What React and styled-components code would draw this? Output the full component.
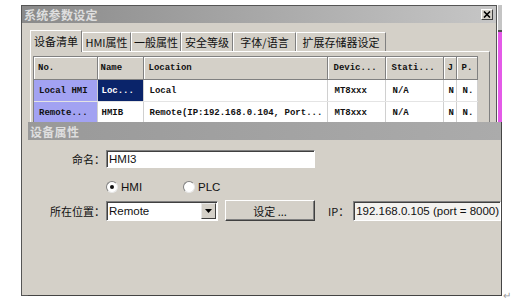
import React from 'react';
import styled, { createGlobalStyle } from 'styled-components';

const cjk = `"Noto Sans CJK SC", "Liberation Sans", sans-serif`;
const sans = `"Liberation Sans", "Noto Sans CJK SC", sans-serif`;
const mono = `"Liberation Mono", "Noto Sans CJK SC", monospace`;

const GlobalStyle = createGlobalStyle`
    html, body {
        margin: 0;
        padding: 0;
        background: #fff;
    }
    body {
        width: 524px;
        height: 306px;
        overflow: hidden;
    }
`

const Desktop = styled.div`
    position: relative;
    width: 524px;
    height: 306px;
    box-sizing: border-box;
    padding: 5px 0 0 21px;
    display: flex;
    align-items: flex-start;
    overflow: hidden;
`

const BackWindow = styled.div`
    width: 476px;
    height: 291px;
    box-sizing: border-box;
    border: 1px solid #555;
    background: #d4d0c8;
    display: flex;
    flex-direction: column;
    overflow: hidden;
`

const TitleBar = styled.div`
    height: ${p => p.$h}px;
    flex-shrink: 0;
    display: flex;
    align-items: center;
    justify-content: space-between;
    padding: 0 3px 0 2px;
    background: linear-gradient(90deg, ${p => p.$from}, ${p => p.$to});
    color: #dedede;
    font-family: ${cjk};
    font-size: 12px;
    font-weight: 700;
    letter-spacing: 0.3px;
`

const CloseButton = styled.div`
    width: 12px;
    height: 11px;
    box-sizing: border-box;
    background: #d4d0c8;
    border: 1px solid;
    border-color: #fff #404040 #404040 #fff;
    display: flex;
    align-items: center;
    justify-content: center;
`

const WindowBody = styled.div`
    padding: 6px 6px 0 8px;
    display: flex;
    flex-direction: column;
`

const TabStrip = styled.div`
    display: flex;
    align-items: flex-end;
    height: 22px;
    position: relative;
    z-index: 1;
`

const Tab = styled.div`
    width: ${p => p.$w}px;
    height: ${p => (p.$active ? 22 : 19)}px;
    box-sizing: border-box;
    display: flex;
    align-items: center;
    justify-content: center;
    border-left: 1px solid #fff;
    border-top: 1px solid #fff;
    border-right: 1px solid #808080;
    background: #d4d0c8;
    font-family: ${cjk};
    font-size: 11px;
    color: #111;
    white-space: nowrap;
    margin-bottom: ${p => (p.$active ? -1 : 0)}px;
    padding-bottom: ${p => (p.$active ? 1 : 0)}px;
`

const TabPanel = styled.div`
    height: 120px;
    box-sizing: border-box;
    border-top: 1px solid #fff;
    border-left: 1px solid #fff;
    border-right: 1px solid #808080;
    padding: 4px 9px 0 2px;
`

const ListView = styled.div`
    border-top: 1px solid #808080;
    border-left: 1px solid #808080;
    background: #fff;
    width: 444px;
`

const Table = styled.table`
    border-collapse: collapse;
    table-layout: fixed;
    width: 443px;
    font-family: ${mono};
    font-size: 9px;
    font-weight: 700;
    color: #111;
`

const HeadCell = styled.th`
    height: 22px;
    padding: 0 0 0 ${p => p.$pad ?? 4}px;
    text-align: left;
    font-weight: 700;
    background: #d4d0c8;
    border-right: 1px solid #808080;
    border-bottom: 1px solid #808080;
    box-shadow: inset 1px 1px #fff;
    white-space: nowrap;
    overflow: hidden;
`

const Cell = styled.td`
    height: 21px;
    padding: 0 0 0 ${p => p.$pad ?? 5}px;
    background: ${p => p.$bg || '#fff'};
    color: ${p => p.$fg || '#111'};
    border-right: 1px solid #d0d0d0;
    border-bottom: 1px solid #e4e4e4;
    white-space: nowrap;
    overflow: hidden;
`

const SideStrip = styled.div`
    width: 4px;
    margin-left: 1px;
    display: flex;
    flex-direction: column;
`

const StripGrip = styled.div`
    height: 25px;
    background: #c4c4c4;
    border-bottom: 2px solid #505050;
`

const StripPink = styled.div`
    height: 92px;
    background: #e45ae8;
`

const ReturnMark = styled.div`
    align-self: flex-end;
    margin: 0 0 5px 1px;
    font-family: ${sans};
    font-size: 10px;
    color: #9a9a9a;
`

const FrontDialog = styled.div`
    position: absolute;
    left: 28px;
    top: 122px;
    width: 474px;
    height: 174px;
    box-sizing: border-box;
    background: #d4d0c8;
    border-right: 1px solid #444;
    border-bottom: 1px solid #444;
    display: flex;
    flex-direction: column;
    overflow: hidden;
`

const DialogBody = styled.div`
    display: flex;
    flex-direction: column;
    padding-top: 10px;
`

const FieldRow = styled.div`
    display: flex;
    align-items: center;
    margin-top: ${p => p.$top || 0}px;
    height: ${p => p.$h}px;
    padding-left: ${p => p.$indent || 0}px;
`

const Label = styled.div`
    width: 77px;
    margin-right: 1px;
    text-align: right;
    font-family: ${cjk};
    font-size: 11px;
    color: #111;
    white-space: nowrap;
`

const Sunken = styled.div`
    height: ${p => p.$h}px;
    width: ${p => (p.$w ? `${p.$w}px` : 'auto')};
    flex: ${p => (p.$w ? 'none' : '1 0 auto')};
    box-sizing: border-box;
    background: ${p => p.$bg || '#fff'};
    border: 1px solid;
    border-color: #808080 #fff #fff #808080;
    box-shadow: inset 1px 1px #404040;
    display: flex;
    align-items: center;
    padding-left: 2px;
    font-family: ${sans};
    font-size: 11.5px;
    color: #111;
    white-space: nowrap;
`

const SelectText = styled.div`
    flex: 1;
`

const DropButton = styled.div`
    width: 15px;
    height: 16px;
    margin-right: 1px;
    box-sizing: border-box;
    background: #d4d0c8;
    border: 1px solid;
    border-color: #e8e8e8 #404040 #404040 #e8e8e8;
    display: flex;
    align-items: center;
    justify-content: center;
`

const PushButton = styled.div`
    width: 90px;
    height: 21px;
    margin-left: 7px;
    box-sizing: border-box;
    background: #d4d0c8;
    border: 1px solid;
    border-color: #fff #404040 #404040 #fff;
    box-shadow: inset -1px -1px #808080;
    display: flex;
    align-items: center;
    justify-content: center;
    font-family: ${cjk};
    font-size: 11px;
    color: #111;
`

const IpLabel = styled.div`
    margin: 0 4px 0 13px;
    font-family: ${cjk};
    font-size: 11px;
    color: #111;
`

const RadioOption = styled.div`
    display: flex;
    align-items: center;
    gap: 3px;
    width: ${p => p.$w}px;
    font-family: ${sans};
    font-size: 11.5px;
    color: #111;
`

const RadioDot = styled.span`
    width: 12px;
    height: 12px;
    box-sizing: border-box;
    border-radius: 50%;
    background: #fff;
    border: 1px solid;
    border-color: #808080 #e8e8e8 #e8e8e8 #808080;
    display: flex;
    align-items: center;
    justify-content: center;
    &::after {
        content: '';
        width: 4px;
        height: 4px;
        border-radius: 50%;
        background: ${p => (p.$on ? '#111' : 'transparent')};
    }
`

const tabs = [
    { label: '设备清单', w: 52, active: true },
    { label: 'HMI属性', w: 49 },
    { label: '一般属性', w: 50 },
    { label: '安全等级', w: 52 },
    { label: '字体/语言', w: 63 },
    { label: '扩展存储器设定', w: 90 },
]

const columns = [
    { title: 'No.', w: 63, pad: 4 },
    { title: 'Name', w: 46, pad: 3 },
    { title: 'Location', w: 184, pad: 5 },
    { title: 'Devic...', w: 58, pad: 6 },
    { title: 'Stati...', w: 58, pad: 6 },
    { title: 'J', w: 13, pad: 4 },
    { title: 'P.', w: 21, pad: 5 },
]

const rows = [
    ['Local HMI', 'Loc...', 'Local', 'MT8xxx', 'N/A', 'N', 'N.'],
    ['Remote...', 'HMIB', 'Remote(IP:192.168.0.104, Port...', 'MT8xxx', 'N/A', 'N', 'N.'],
]

const cellColors = (r, c) => {
    if (c === 0) return { bg: '#a2a2f2' };
    if (r === 0 && c === 1) return { bg: '#0a246a', fg: '#fff' };
    return {};
}

const App = () => (
    <>
        <GlobalStyle />
        <Desktop>
            <BackWindow>
                <TitleBar $h={17} $from="#8a8a8a" $to="#c6c6c6">
                    <span>系统参数设定</span>
                    <CloseButton>
                        <svg width="8" height="7" viewBox="0 0 8 7">
                            <path d="M1 0.5 L7 6.5 M7 0.5 L1 6.5" stroke="#000" strokeWidth="1.6" />
                        </svg>
                    </CloseButton>
                </TitleBar>
                <WindowBody>
                    <TabStrip>
                        {tabs.map(t => (
                            <Tab key={t.label} $w={t.w} $active={t.active}>{t.label}</Tab>
                        ))}
                    </TabStrip>
                    <TabPanel>
                        <ListView>
                            <Table>
                                <colgroup>
                                    {columns.map(c => <col key={c.title} style={{ width: c.w }} />)}
                                </colgroup>
                                <thead>
                                    <tr>
                                        {columns.map(c => (
                                            <HeadCell key={c.title} $pad={c.pad}>{c.title}</HeadCell>
                                        ))}
                                    </tr>
                                </thead>
                                <tbody>
                                    {rows.map((row, r) => (
                                        <tr key={r}>
                                            {row.map((v, c) => {
                                                const col = cellColors(r, c);
                                                return (
                                                    <Cell key={c} $bg={col.bg} $fg={col.fg} $pad={columns[c].pad + 1}>{v}</Cell>
                                                );
                                            })}
                                        </tr>
                                    ))}
                                </tbody>
                            </Table>
                        </ListView>
                    </TabPanel>
                </WindowBody>
            </BackWindow>
            <SideStrip>
                <StripGrip />
                <StripPink />
            </SideStrip>
            <ReturnMark>↵</ReturnMark>

            <FrontDialog>
                <TitleBar $h={18} $from="#999999" $to="#ababab">
                    <span>设备属性</span>
                </TitleBar>
                <DialogBody>
                    <FieldRow $h={18}>
                        <Label>命名：</Label>
                        <Sunken $w={209} $h={18}>HMI3</Sunken>
                    </FieldRow>
                    <FieldRow $h={12} $top={13} $indent={78}>
                        <RadioOption $w={77}>
                            <RadioDot $on />
                            <span>HMI</span>
                        </RadioOption>
                        <RadioOption $w={60}>
                            <RadioDot />
                            <span>PLC</span>
                        </RadioOption>
                    </FieldRow>
                    <FieldRow $h={21} $top={7}>
                        <Label>所在位置：</Label>
                        <Sunken $w={112} $h={20}>
                            <SelectText>Remote</SelectText>
                            <DropButton>
                                <svg width="7" height="4" viewBox="0 0 7 4">
                                    <path d="M0 0 H7 L3.5 4 Z" fill="#000" />
                                </svg>
                            </DropButton>
                        </Sunken>
                        <PushButton>设定 ...</PushButton>
                        <IpLabel>IP：</IpLabel>
                        <Sunken $h={20} $bg="#f3f2ef">192.168.0.105 (port = 8000)</Sunken>
                    </FieldRow>
                </DialogBody>
            </FrontDialog>
        </Desktop>
    </>
)

export default App;
